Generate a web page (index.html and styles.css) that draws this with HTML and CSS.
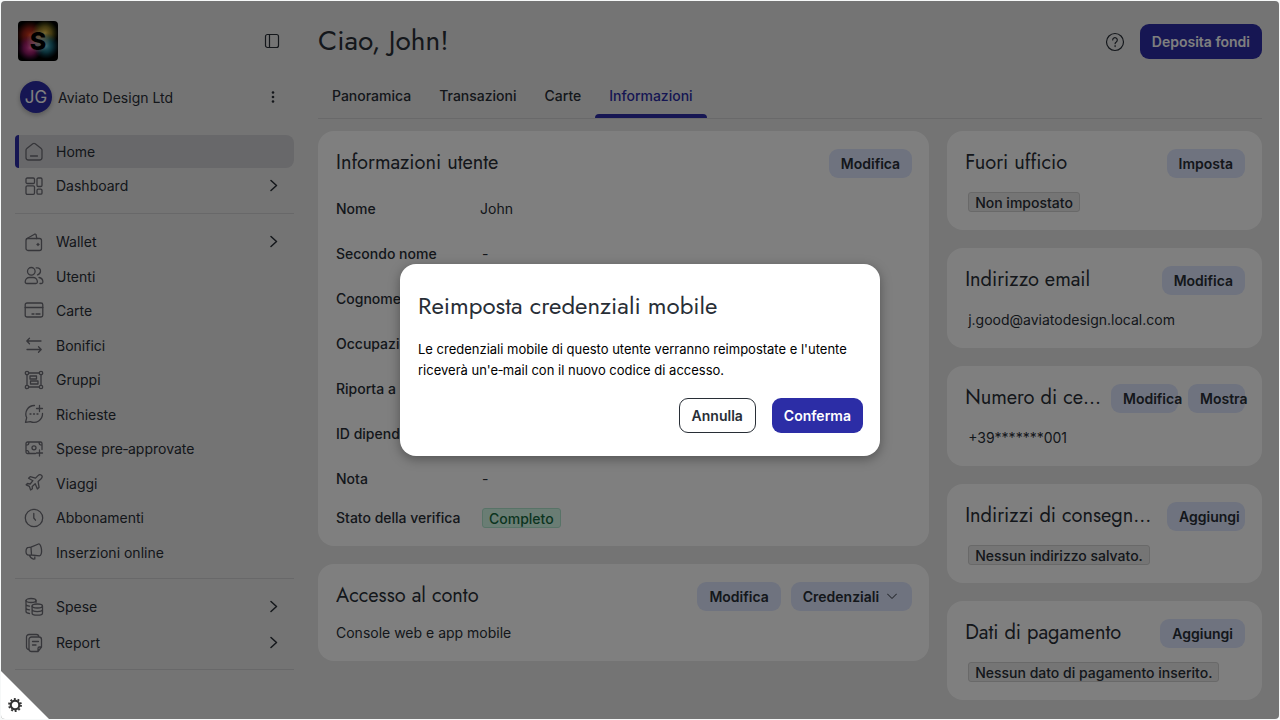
FILE: index.html
```html
<!DOCTYPE html>
<html lang="it">
<head>
<meta charset="utf-8">
<title>Informazioni utente</title>
<link rel="stylesheet" href="styles.css">
</head>
<body>
<div class="app">
  <aside class="sidebar">
    <div class="brand">
      <svg class="logo" viewBox="0 0 40 40" role="img" aria-label="Logo">
        <defs>
          <radialGradient id="g1"><stop offset="0" stop-color="#e8401c"/><stop offset=".5" stop-color="#c0281c" stop-opacity=".7"/><stop offset="1" stop-color="#a02010" stop-opacity="0"/></radialGradient>
          <radialGradient id="g2"><stop offset="0" stop-color="#f0c850"/><stop offset=".5" stop-color="#b8a030" stop-opacity=".7"/><stop offset="1" stop-color="#809020" stop-opacity="0"/></radialGradient>
          <radialGradient id="g3"><stop offset="0" stop-color="#f050a8"/><stop offset=".5" stop-color="#c02088" stop-opacity=".7"/><stop offset="1" stop-color="#801870" stop-opacity="0"/></radialGradient>
          <radialGradient id="g4"><stop offset="0" stop-color="#60c8e0"/><stop offset=".5" stop-color="#2088a0" stop-opacity=".7"/><stop offset="1" stop-color="#106080" stop-opacity="0"/></radialGradient>
          <radialGradient id="g5"><stop offset="0" stop-color="#f8d8c0" stop-opacity=".8"/><stop offset="1" stop-color="#f8d8c0" stop-opacity="0"/></radialGradient>
        </defs>
        <rect width="40" height="40" rx="4" fill="#000"/>
        <circle cx="12" cy="14" r="14" fill="url(#g1)"/>
        <circle cx="27" cy="12" r="13" fill="url(#g2)"/>
        <circle cx="12" cy="27" r="13" fill="url(#g3)"/>
        <circle cx="28" cy="25" r="13" fill="url(#g4)"/>
        <circle cx="20" cy="20" r="12" fill="url(#g5)"/>
        <text class="logo-letter" x="20" y="29" text-anchor="middle">S</text>
      </svg>
      <button class="icon-button" aria-label="Comprimi menu">
        <svg width="16" height="16" viewBox="0 0 16 16"><rect x="1.500" y="1.500" width="13" height="13" rx="2"/><path d="M5.500 1.500v13"/></svg>
      </button>
    </div>
    <div class="account">
      <span class="avatar">JG</span>
      <span class="company">Aviato Design Ltd</span>
      <button class="icon-button" aria-label="Altre opzioni">
        <svg class="dots" width="16" height="16" viewBox="0 0 16 16"><circle cx="8" cy="3.500" r="1.300"/><circle cx="8" cy="8" r="1.300"/><circle cx="8" cy="12.500" r="1.300"/></svg>
      </button>
    </div>
    <nav>
      <ul class="group group-top">
        <li><a class="item active" href="#"><svg class="icon" viewBox="0 0 20 20"><path d="M2 8.200a2 2 0 0 1 .8-1.600l6-4.800a2 2 0 0 1 2.400 0l6 4.800a2 2 0 0 1 .8 1.600v7.300a2.500 2.500 0 0 1-2.500 2.500h-11A2.500 2.500 0 0 1 2 15.500zM6.500 14h7"/></svg>Home</a></li>
        <li><a class="item" href="#"><svg class="icon" viewBox="0 0 20 20"><rect x="2" y="2" width="8.500" height="5.500" rx="1.200"/><rect x="2" y="9.800" width="8.500" height="8.500" rx="1.200"/><rect x="13" y="2" width="5" height="8.500" rx="1.200"/><rect x="13" y="13.200" width="5" height="5" rx="1.200"/></svg>Dashboard<svg class="chevron" viewBox="0 0 8 12"><path d="M1 1l5.500 5L1 11"/></svg></a></li>
      </ul>
      <ul class="group group-main">
        <li><a class="item" href="#"><svg class="icon" viewBox="0 0 20 20"><rect x="2" y="6.500" width="15.500" height="12" rx="2"/><path d="M2.500 6.800 11 2l1 .5.800 4M14 11.500v2M13 12.500h2"/></svg>Wallet<svg class="chevron" viewBox="0 0 8 12"><path d="M1 1l5.500 5L1 11"/></svg></a></li>
        <li><a class="item" href="#"><svg class="icon" viewBox="0 0 20 20"><circle cx="7.300" cy="5.300" r="3.800"/><path d="M1.200 16c0-2.800 2-4.500 4.300-4.500h3.600c2.300 0 4.300 1.700 4.300 4.500 0 .9-.7 1.500-1.500 1.500H2.700c-.8 0-1.500-.6-1.500-1.500zM12.200 1.900c3.300-.6 4.500 1.700 4.300 3.500-.2 1.800-1.300 3-3 3.400M15 11.500c2.500.3 3.800 2 3.900 4.500 0 .9-.6 1.500-1.500 1.500H16"/></svg>Utenti</a></li>
        <li><a class="item" href="#"><svg class="icon" viewBox="0 0 20 20"><rect x="1.200" y="2" width="17.600" height="14" rx="1.800"/><path d="M1.200 6.500h17.600M8 13h2M12 13h4"/></svg>Carte</a></li>
        <li><a class="item" href="#"><svg class="icon" viewBox="0 0 20 20"><path d="M17 6H3M5.500 3.300 2.800 6l2.700 2.700M3 14.500h14M14.500 11.800l2.700 2.700-2.700 2.700"/></svg>Bonifici</a></li>
        <li><a class="item" href="#"><svg class="icon" viewBox="0 0 20 20"><circle cx="3" cy="3" r="1.700"/><circle cx="17" cy="3" r="1.700"/><circle cx="3" cy="17" r="1.700"/><circle cx="17" cy="17" r="1.700"/><path d="M4.700 3h10.600M4.700 17h10.600M3 4.700v10.600M17 4.700v10.600"/><rect x="6" y="6" width="6.500" height="3"/><rect x="6.500" y="11" width="7.500" height="3"/></svg>Gruppi</a></li>
        <li><a class="item" href="#"><svg class="icon" viewBox="0 0 20 20"><path d="M10.500 1.500a8.500 8.500 0 0 0-7.800 12.200L1.500 18.300l4.800-.7A8.600 8.600 0 0 0 18.500 9.500M15.500 1.500v6M12.500 4.500h6M6 10h1M9.500 10h1M13 10h1"/></svg>Richieste</a></li>
        <li><a class="item" href="#"><svg class="icon" viewBox="0 0 20 20"><path d="M11.500 14.500H3.500A1.500 1.500 0 0 1 2 13V4.500A1.500 1.500 0 0 1 3.500 3h13A1.500 1.500 0 0 1 18 4.500v6M2 6.200c2 0 3-1.200 3-3.200M15 3c0 2 1 3.200 3 3.200M2 11.300c2 0 3 1.200 3 3.200M15.500 11v6M12.500 14h6"/><circle cx="10" cy="8.800" r="2"/></svg>Spese pre‑approvate</a></li>
        <li><a class="item" href="#"><svg class="icon" viewBox="0 0 20 20"><path d="M17.600 2.400c-1.200-1.200-2.600-.8-3.600.2l-2.500 2.500-5.300-1.500-1.600 1.600 4.300 2.500L6.200 11 3.500 10.500 2.200 11.800l3.200 1.600 1.200 3.600 1.800-1.200-.2-2.400 3-2.700 2.200 5.300 1.700-1.700-1-5.800 2.800-2.500c1.200-1.200 1.500-2.800.7-3.600z"/></svg>Viaggi</a></li>
        <li><a class="item" href="#"><svg class="icon" viewBox="0 0 20 20"><circle cx="10" cy="10" r="8.700"/><path d="M9.800 5.500V10l1.700 2.200"/></svg>Abbonamenti</a></li>
        <li><a class="item" href="#"><svg class="icon" viewBox="0 0 20 20"><path d="M7 5.200 14.500 2c1.500-.5 2.700 2.500 3 5.500.4 3.300-.5 6.300-2 6.300L7.500 13M7 5.200l.5 7.800-2.700.1C3 13 2 11.500 2 9.500c0-2.300 1-4 2.700-4.100zM5.500 13.200c.4 2 1.700 3.200 4 4l1.300-.3V13.500"/></svg>Inserzioni online</a></li>
      </ul>
      <ul class="group group-last">
        <li><a class="item" href="#"><svg class="icon" viewBox="0 0 20 20"><ellipse cx="7" cy="3.500" rx="5" ry="2"/><path d="M2 3.500v11c0 1 1.500 1.800 3.500 2M12 3.500v2M2 7.200c0 1 1.500 1.700 3.500 1.900M2 10.900c0 1 1.500 1.700 3.500 1.900"/><ellipse cx="13.300" cy="9" rx="5.200" ry="2"/><path d="M8.100 9v7.200c0 2.600 10.400 2.600 10.400 0V9M8.100 12.600c0 2.600 10.400 2.600 10.400 0"/></svg>Spese<svg class="chevron" viewBox="0 0 8 12"><path d="M1 1l5.500 5L1 11"/></svg></a></li>
        <li><a class="item" href="#"><svg class="icon" viewBox="0 0 20 20"><path d="M7.500 4H15a2.500 2.500 0 0 1 2.500 2.500V14L14 18.500H7.500A2.500 2.500 0 0 1 5 16V6.500A2.500 2.500 0 0 1 7.500 4zM17.500 14h-2a1.500 1.500 0 0 0-1.500 1.500v3M5 16.500A2.500 2.500 0 0 1 2.500 14V4A2.500 2.500 0 0 1 5 1.500h7.500c1.300 0 2.300 1 2.500 2.500M8.500 8.500h6M8.500 12h3.500"/></svg>Report<svg class="chevron" viewBox="0 0 8 12"><path d="M1 1l5.500 5L1 11"/></svg></a></li>
      </ul>
    </nav>
  </aside>

  <main class="main">
    <header class="page-head">
      <h1>Ciao, John!</h1>
      <button class="icon-button" aria-label="Aiuto">
        <svg width="20" height="20" viewBox="0 0 20 20"><circle cx="10" cy="10" r="8.500"/><path d="M7.700 8a2.300 2.300 0 1 1 3.600 1.900c-.8.500-1.200.9-1.200 1.800M10.100 13.600v1"/></svg>
      </button>
      <button class="btn btn-primary">Deposita fondi</button>
    </header>
    <nav class="tabs">
      <a class="tab" href="#">Panoramica</a>
      <a class="tab" href="#">Transazioni</a>
      <a class="tab" href="#">Carte</a>
      <a class="tab selected" href="#">Informazioni</a>
    </nav>
    <div class="columns">
      <div class="column">
        <section class="card">
          <div class="card-head"><h2>Informazioni utente</h2><button class="btn btn-soft">Modifica</button></div>
          <dl class="details">
            <div><dt>Nome</dt><dd>John</dd></div>
            <div><dt>Secondo nome</dt><dd class="inset">-</dd></div>
            <div><dt>Cognome</dt><dd></dd></div>
            <div><dt>Occupazione</dt><dd></dd></div>
            <div><dt>Riporta a</dt><dd></dd></div>
            <div><dt>ID dipendente</dt><dd></dd></div>
            <div><dt>Nota</dt><dd class="inset">-</dd></div>
            <div class="status"><dt>Stato della verifica</dt><dd class="inset"><span class="badge badge-ok">Completo</span></dd></div>
          </dl>
        </section>
        <section class="card card-access">
          <div class="card-head"><h2>Accesso al conto</h2><button class="btn btn-soft">Modifica</button><button class="btn btn-soft">Credenziali<svg class="caret" viewBox="0 0 10 7"><path d="M.5 1 5 5.500 9.500 1"/></svg></button></div>
          <p>Console web e app mobile</p>
        </section>
      </div>
      <div class="column">
        <section class="card">
          <div class="card-head"><h2>Fuori ufficio</h2><button class="btn btn-soft">Imposta</button></div>
          <div class="value"><span class="badge">Non impostato</span></div>
        </section>
        <section class="card">
          <div class="card-head"><h2>Indirizzo email</h2><button class="btn btn-soft">Modifica</button></div>
          <p class="value">j.good@aviatodesign.local.com</p>
        </section>
        <section class="card">
          <div class="card-head"><h2>Numero di cellulare</h2><button class="btn btn-soft tight-m">Modifica</button><button class="btn btn-soft tight-s">Mostra</button></div>
          <p class="value">+39*******001</p>
        </section>
        <section class="card">
          <div class="card-head"><h2>Indirizzi di consegna salvati</h2><button class="btn btn-soft tight-l">Aggiungi</button></div>
          <div class="value"><span class="badge">Nessun indirizzo salvato.</span></div>
        </section>
        <section class="card">
          <div class="card-head"><h2>Dati di pagamento</h2><button class="btn btn-soft">Aggiungi</button></div>
          <div class="value"><span class="badge">Nessun dato di pagamento inserito.</span></div>
        </section>
      </div>
    </div>
  </main>

  <div class="backdrop">
    <section class="modal" role="dialog" aria-modal="true" aria-labelledby="modal-title">
      <h2 id="modal-title">Reimposta credenziali mobile</h2>
      <p>Le credenziali mobile di questo utente verranno reimpostate e l'utente riceverà un'e‑mail con il nuovo codice di accesso.</p>
      <div class="modal-actions">
        <button class="btn btn-outline">Annulla</button>
        <button class="btn btn-primary">Conferma</button>
      </div>
    </section>
  </div>

  <button class="corner" aria-label="Impostazioni">
    <svg width="14" height="14" viewBox="0 0 14 14"><circle cx="7" cy="7" r="4.300" fill="none" stroke="#333" stroke-width="2.200"/><circle cx="7" cy="7" r="6" fill="none" stroke="#333" stroke-width="1.800" stroke-linecap="butt" stroke-dasharray="1.900 1.870"/></svg>
  </button>
</div>
</body>
</html>
```

FILE: styles.css
```css
* { box-sizing: border-box; }

body {
  margin: 0;
  padding: 1px;
  min-height: 100vh;
  display: flex;
  background: #f6f8f8;
  color: #282e36;
  font: 14px/21px Inter, "Liberation Sans", sans-serif;
}

h1, h2, p, ul, dl, dd { margin: 0; padding: 0; }
h1, h2 { font-family: Jost, Lato, sans-serif; font-weight: 400; }
ul { list-style: none; }
a { color: inherit; text-decoration: none; }
button { font: inherit; color: inherit; border: 0; background: none; padding: 0; }
svg { display: block; fill: none; stroke: currentColor; stroke-linejoin: round; }
svg path { stroke-linecap: round; }

.app {
  position: relative;
  flex: 1;
  min-width: 0;
  display: flex;
  gap: 24px;
  padding: 0 17px 0 14px;
  border-radius: 4px;
  overflow: hidden;
  background: #e9e9e9;
}

.sidebar { width: 279px; flex: none; padding-top: 20px; }
.brand { display: flex; align-items: center; justify-content: space-between; padding: 0 14px 0 3px; }
.logo { width: 40px; height: 40px; stroke: none; }
.logo-letter { font: 800 25px Inter, sans-serif; fill: #000; }
.icon-button { flex: none; }
.icon-button svg { stroke-width: 1.2; }
.icon-button .dots { fill: currentColor; stroke: none; }

.account { display: flex; align-items: center; gap: 6px; padding: 20px 13px 22px 5px; }
.avatar {
  width: 32px; height: 32px; border-radius: 50%;
  background: #2c2da6; color: #fff;
  font-size: 17px; line-height: 32px; text-align: center;
  box-shadow: 0 2px 5px #0004;
}
.company { flex: 1; }

.group { display: flex; flex-direction: column; border-bottom: 1px solid #d0d0d2; }
.group-top { gap: 1px; padding-bottom: 11px; }
.group-main { min-height: 365px; padding: 11px 0 9px; justify-content: space-between; }
.group-last { gap: 3px; padding: 11px 0 10px; }
.item {
  display: flex; align-items: center; gap: 12px;
  height: 33px; padding: 0 16px 0 5px;
  border-left: 4px solid transparent;
}
.active { background: #d1d1d4; border-color: #2c2da6; border-radius: 4px 8px 8px 4px; }
.icon { width: 20px; height: 20px; color: #6c6c74; stroke-width: 1.3; }
.chevron { width: 8px; height: 13px; margin-left: auto; stroke-width: 1.5; }

.main { flex: 1; min-width: 0; padding-bottom: 18px; }
.page-head { display: flex; align-items: center; gap: 15px; padding-top: 23px; }
.page-head h1 { flex: 1; align-self: flex-start; font-size: 28px; line-height: 33px; }

.btn { flex: none; border-radius: 9px; font-weight: 600; white-space: nowrap; }
.btn-primary, .btn-outline { height: 35px; padding: 0 12px; }
.btn-primary { background: #2c2da6; color: #fff; }
.btn-outline { border: 1px solid #282e36; background: #fff; }
.btn-soft { height: 29px; padding: 0 12px; background: #dfe7ff; display: flex; align-items: center; gap: 8px; }
.caret { width: 10px; height: 7px; margin-right: 3px; }
.tight-s { width: 57px; }
.tight-m { width: 67px; }
.tight-l { width: 78px; }

.tabs { display: flex; margin-top: 16px; border-bottom: 1px solid #d3d3d5; font-weight: 500; }
.tab { padding: 10px 14px 8px; border-bottom: 4px solid transparent; position: relative; }
.selected { color: #2c2da6; }
.selected::after {
  content: ""; position: absolute; left: 0; right: 0; bottom: -4px;
  height: 4px; border-radius: 4px 4px 0 0; background: #2c2da6;
}

.columns { display: grid; grid-template-columns: 66fr 34fr; gap: 18px; padding-top: 12px; align-items: start; }
.column { display: grid; grid-template-columns: minmax(0, 1fr); gap: 18px; }
.card { background: #fff; border-radius: 16px; padding: 18px 17px 18px 18px; }
.card-head { display: flex; align-items: flex-start; gap: 10px; }
.card-head h2 {
  flex: 1; min-width: 0; font-size: 20px; line-height: 27px;
  overflow: hidden; text-overflow: ellipsis; white-space: nowrap;
}
.card-access p { margin-top: 11px; }
.value { display: flex; padding: 14px 0 0 3px; }

.details { padding-top: 8px; }
.details > div { display: flex; align-items: center; padding: 12px 0; }
.details > .status { padding: 6px 0 0; }
.details dt { width: 144px; font-weight: 500; }
.inset { padding-left: 2px; }

.badge {
  display: block; height: 20px; padding: 0 6px; line-height: 20px;
  border: 1px solid #d2d2d2; border-radius: 3px; background: #eaeaea; font-weight: 500;
}
.badge-ok { background: #d4fbe9; border-color: #b0e6cf; color: #17693f; }

.backdrop {
  position: absolute; inset: 0; z-index: 1;
  display: flex; align-items: center; justify-content: center;
  background: rgba(0, 0, 0, .5);
}
.modal {
  width: 480px; padding: 24px 17px 23px 18px;
  border-radius: 16px; background: #fff;
  box-shadow: 0 3px 12px rgba(0, 0, 0, .35);
}
.modal h2 { font-size: 24px; line-height: 36px; }
.modal p { margin-top: 15px; color: #000; font-size: 13px; }
.modal-actions { display: flex; justify-content: flex-end; gap: 16px; margin-top: 17px; }

.corner {
  position: absolute; left: 0; bottom: 0; z-index: 2;
  width: 48px; height: 48px; padding: 0 0 7px 7px;
  display: flex; align-items: flex-end;
  background: #fff; clip-path: polygon(0 0, 100% 100%, 0 100%);
}
```
